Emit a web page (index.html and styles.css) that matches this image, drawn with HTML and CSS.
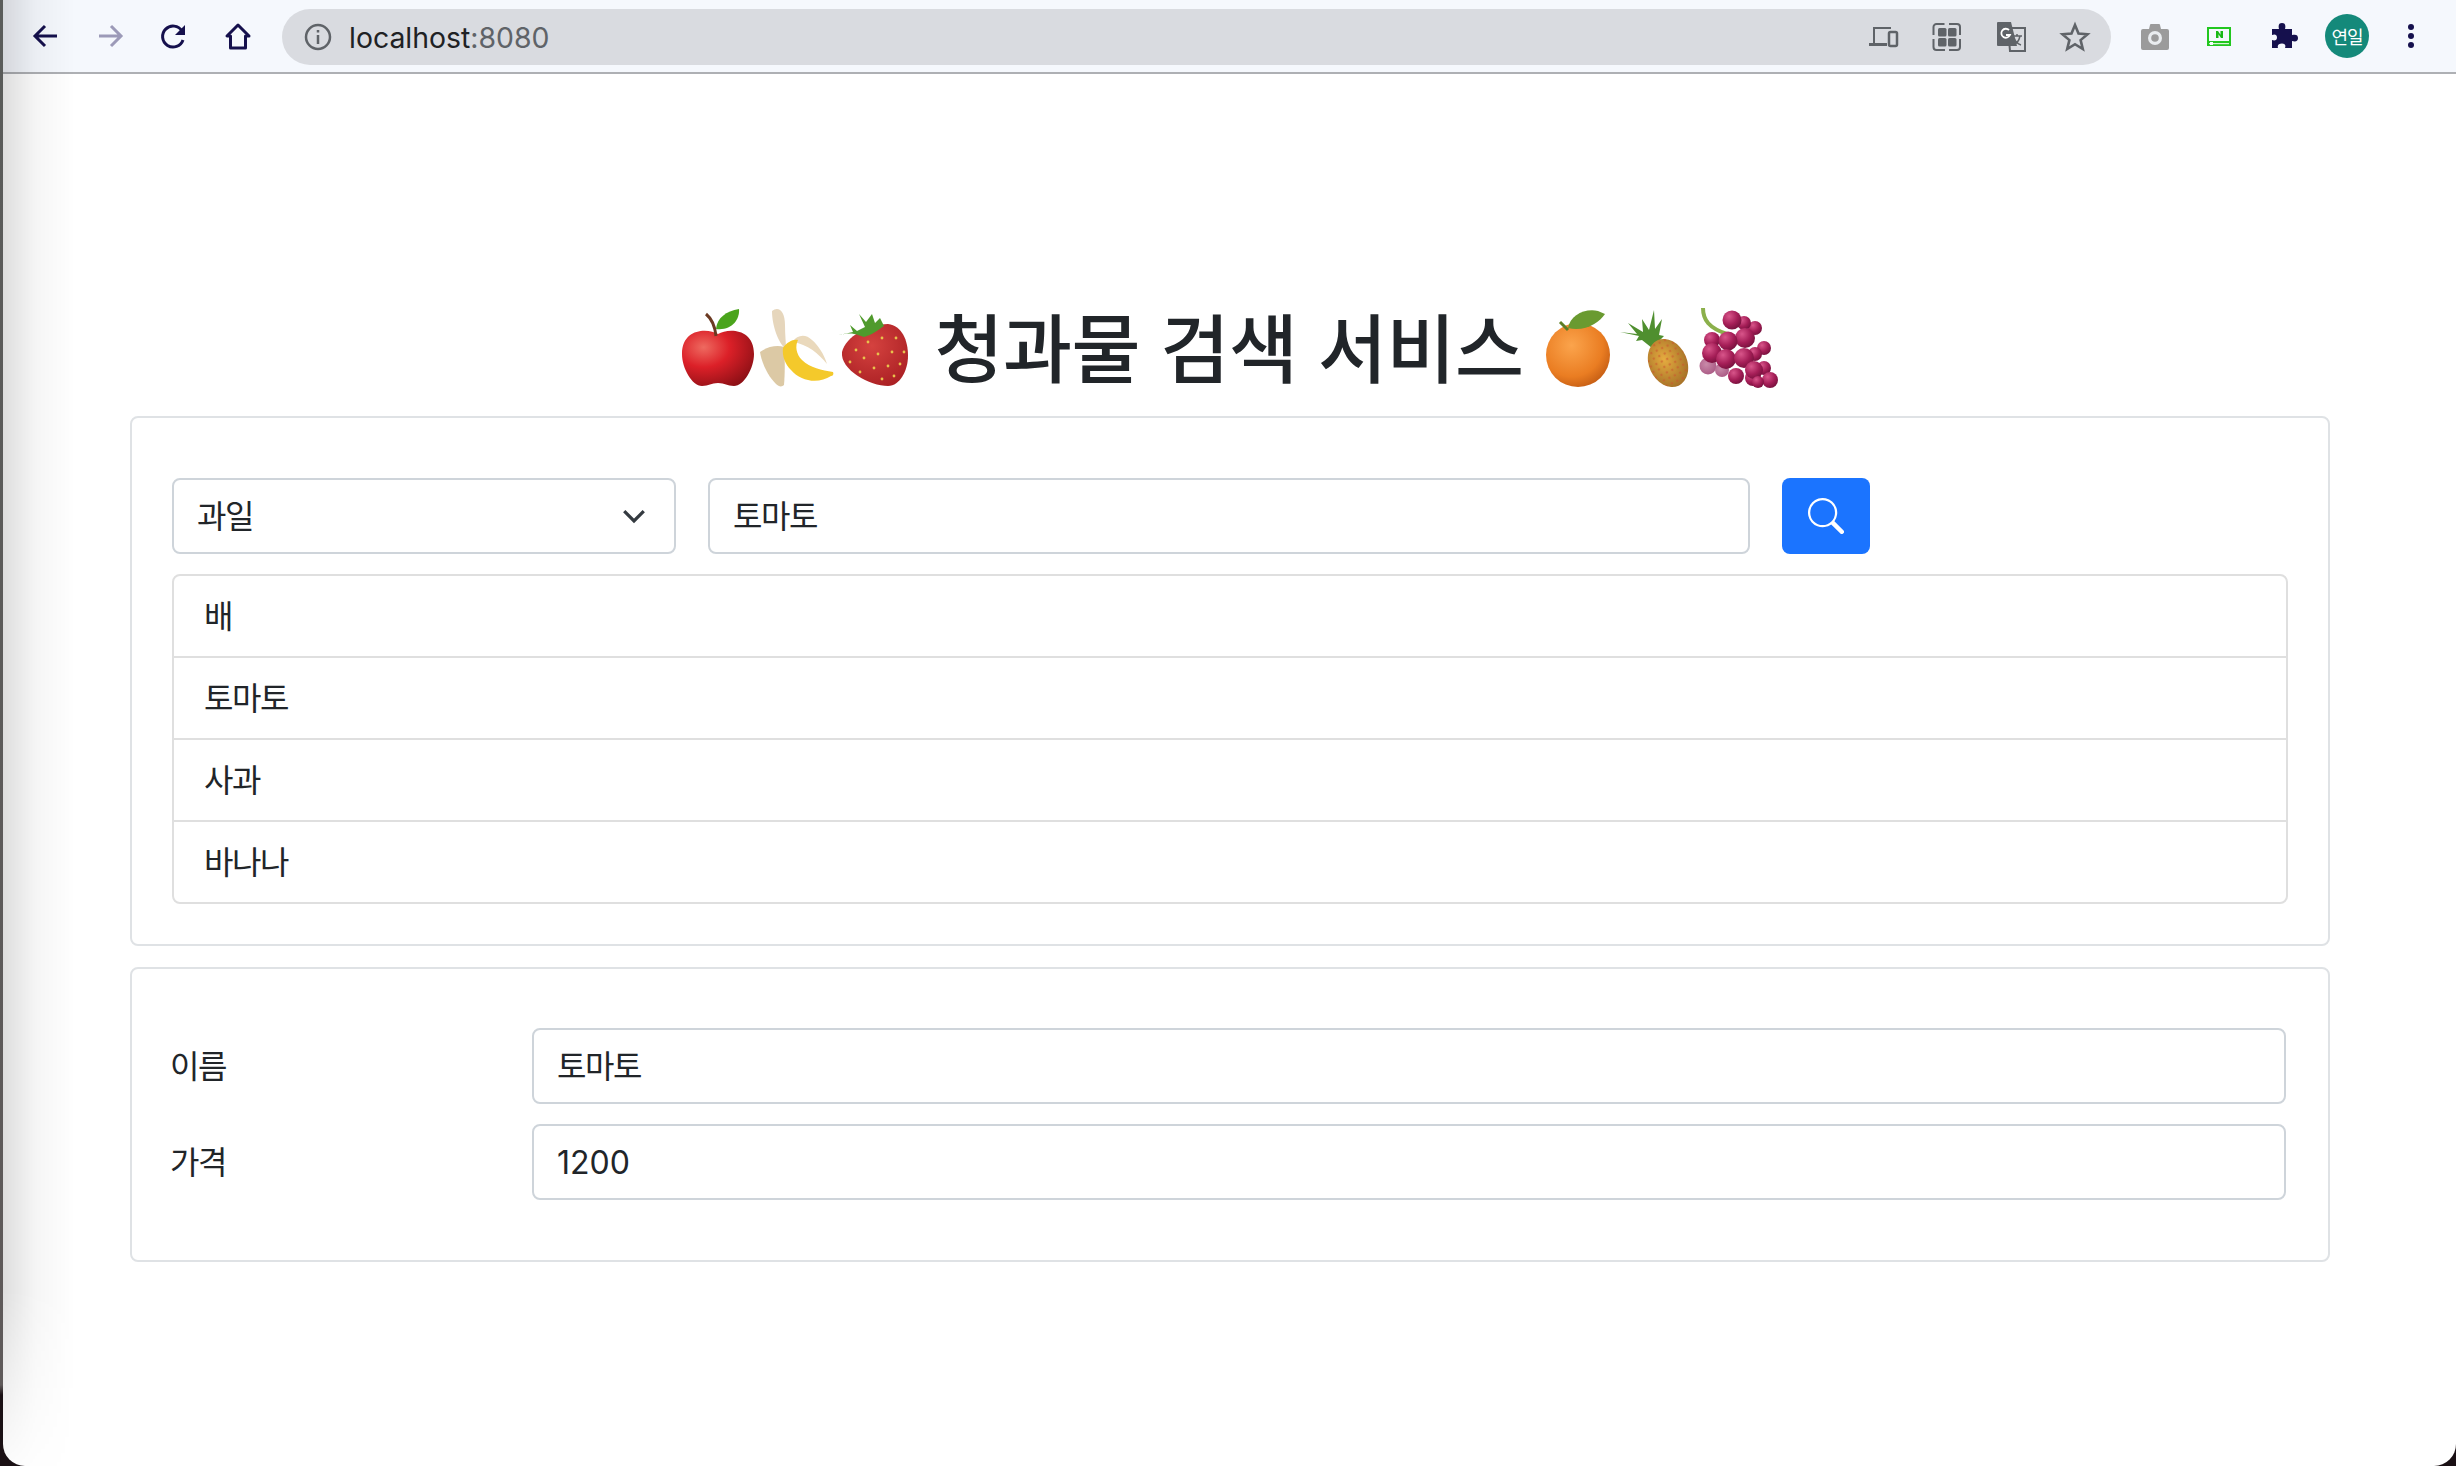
FILE: index.html
```html
<!DOCTYPE html>
<html lang="ko">
<head>
  <meta charset="UTF-8">
  <title>청과물 검색 서비스</title>
  <link rel="stylesheet" href="styles.css">
</head>
<body>
  <div class="window">
    <header class="toolbar">
      <svg class="nav-icon" viewBox="0 0 32 32"><path d="M27 16H6M15 6L5 16l10 10" fill="none" stroke="#15104d" stroke-width="3"/></svg>
      <svg class="nav-icon" viewBox="0 0 32 32"><path d="M5 16h21M17 6l10 10-10 10" fill="none" stroke="#9c9ab8" stroke-width="3"/></svg>
      <svg class="nav-icon" viewBox="0 0 32 32"><path d="M25 20a10.500 10.500 0 1 1-1-9" fill="none" stroke="#15104d" stroke-width="3"/><path d="M27 5v10H17z" fill="#15104d"/></svg>
      <svg class="nav-icon" viewBox="0 0 32 32"><path d="M16 5L5 16h3.500v12h15V16H27z" fill="none" stroke="#15104d" stroke-width="3" stroke-linejoin="round"/></svg>
      <div class="omnibox">
        <svg class="omni-info" viewBox="0 0 28 28"><circle cx="14" cy="14" r="12" fill="none" stroke="#5f6368" stroke-width="2.500"/><path d="M14 12v9M14 7v2.500" stroke="#5f6368" stroke-width="2.500"/></svg>
        <span class="url">localhost<span class="url-port">:8080</span></span>
        <div class="omni-actions">
          <svg class="omni-icon" viewBox="0 0 32 32"><path d="M6 6h18v2H8v14h12v3H2v-3h4z" fill="#5f6368"/><rect x="22" y="11" width="8" height="14" rx="1.500" fill="none" stroke="#5f6368" stroke-width="2.500"/></svg>
          <svg class="omni-icon" viewBox="0 0 32 32"><rect x="7" y="7" width="8.500" height="8.500" rx="1.500" fill="#5f6368"/><rect x="17" y="7" width="8.500" height="8.500" rx="1.500" fill="#5f6368"/><rect x="7" y="17" width="8.500" height="8.500" rx="1.500" fill="#5f6368"/><rect x="17" y="17" width="8.500" height="8.500" rx="1.500" fill="#5f6368"/><path d="M2.500 14V6a3 3 0 0 1 3-3h8M18 3h8a3 3 0 0 1 3 3v8M29 18v8a3 3 0 0 1-3 3h-8M14 29H5.500a3 3 0 0 1-3-3v-8" fill="none" stroke="#5f6368" stroke-width="2"/></svg>
          <svg class="omni-icon" viewBox="0 0 32 32"><path d="M13 7h17v23H15z" fill="none" stroke="#5f6368" stroke-width="2"/><path d="M3 1h13l6 24H3a1 1 0 0 1-1-1V2a1 1 0 0 1 1-1z" fill="#5f6368"/><path d="M14 9a4.500 4.500 0 1 0 1 5h-4" fill="none" stroke="#fff" stroke-width="1.800"/><path d="M18 15h9M22 13v2M25 15c-1 5-4 8-7 9M19 17c1 3 4 6 7 7" fill="none" stroke="#5f6368" stroke-width="1.500"/></svg>
          <svg class="omni-icon" viewBox="0 0 32 32"><path d="M16 4l3.500 8.500 9 .7-6.900 5.900 2.200 8.900L16 23.200 8.200 28l2.200-8.900-6.900-5.900 9-.7z" fill="none" stroke="#5f6368" stroke-width="2.600"/></svg>
        </div>
      </div>
      <div class="toolbar-actions">
        <svg class="ext-icon" viewBox="0 0 32 32"><path d="M2 11a2 2 0 0 1 2-2h6l1-4a1 1 0 0 1 1-1h8a1 1 0 0 1 1 1l1 4h6a2 2 0 0 1 2 2v17a2 2 0 0 1-2 2H4a2 2 0 0 1-2-2z" fill="#9b9b9b"/><circle cx="16" cy="18" r="7" fill="#e9ecef"/><circle cx="16" cy="18" r="3.800" fill="#9b9b9b"/></svg>
        <svg class="ext-icon" viewBox="0 0 32 32"><rect x="4" y="7" width="24" height="19" fill="#22c71f"/><rect x="6" y="9" width="20" height="12" fill="#f5f8fd"/><rect x="6" y="23" width="20" height="1.200" fill="#d8f5d8"/><rect x="7" y="22" width="3" height="3" fill="#f5f8fd"/><path d="M13 18v-7h2l2.500 3.800V11H20v7h-2l-2.500-3.800V18z" fill="#19b816"/></svg>
        <svg class="ext-icon" viewBox="0 0 32 32"><path d="M5 28V20c3 1 5 0 5-2.500S8 13.500 5 15V9h7c-1-4 0-6 3-6s4 2 3 6h7v6c4-1 6 0 6 3s-2 4-6 3v7h-7c1-3 0-4.500-3-4.500S10 25 11 28z" fill="#15104d"/></svg>
        <div class="avatar">연일</div>
        <svg class="ext-icon" viewBox="0 0 32 32"><circle cx="16" cy="7" r="3" fill="#15104d"/><circle cx="16" cy="16" r="3" fill="#15104d"/><circle cx="16" cy="25" r="3" fill="#15104d"/></svg>
      </div>
    </header>

    <main class="page">
      <h1 class="title">
        <svg class="fruit" viewBox="0 0 80 80">
          <defs>
            <radialGradient id="appleFill" cx="0.3" cy="0.3" r="0.8"><stop offset="0" stop-color="#ee6a60"/><stop offset="0.45" stop-color="#dc2028"/><stop offset="1" stop-color="#8e1016"/></radialGradient>
            <radialGradient id="grape" cx="0.35" cy="0.3" r="0.8"><stop offset="0" stop-color="#d8558a"/><stop offset="0.55" stop-color="#a51e57"/><stop offset="1" stop-color="#6e0e38"/></radialGradient>
            <radialGradient id="grapeLow" cx="0.4" cy="0.4" r="0.8"><stop offset="0" stop-color="#c98aa9"/><stop offset="1" stop-color="#a24f7c"/></radialGradient>
          </defs>
          <path d="M40 26c-10-6-36-6-36 20 0 14 10 32 20 32 7 0 9-3 16-3s9 3 16 3c10 0 20-18 20-32 0-26-26-26-36-20z" fill="url(#appleFill)"/>
          <path d="M38 28C37 18 34 11 28 6" fill="none" stroke="#6b3a22" stroke-width="3"/>
          <path d="M38 21C39 10 48 3 61 1c1 11-8 22-23 20z" fill="#4aa41c"/>
        </svg>
        <svg class="fruit" viewBox="0 0 80 80">
          <path d="M14 3c6-5 13-1 13 14 0 10 1 18 1 24-8-6-14-24-14-38z" fill="#e6d6bc"/>
          <path d="M2 44c8-6 18-7 24-5 1 12 1 26 0 38-2 2-5 2-8-1C10 68 4 56 2 44z" fill="#dcc9a5"/>
          <path d="M34 34c6-8 14-8 20-2 6 5 12 14 15 24-8-10-19-20-35-22z" fill="#ead9bc"/>
          <path d="M25 40c4-6 10-9 15-8-3 6-2 14 4 20 8 8 20 10 31 12 1 2 0 4-2 4-12 8-30 6-40-6-6-6-9-14-8-22z" fill="#f4c92b"/>
        </svg>
        <svg class="fruit" viewBox="0 0 80 80">
          <defs><radialGradient id="berryFill" cx="0.45" cy="0.35" r="0.75"><stop offset="0" stop-color="#d5423f"/><stop offset="1" stop-color="#a81e22"/></radialGradient></defs>
          <path d="M4 44C8 28 30 17 50 16c14 2 20 16 20 32 0 14-8 30-20 30C32 78 2 62 4 44z" fill="url(#berryFill)"/>
          <path d="M1 27c8-2 14-2 19 0l6 2c8-2 14-7 20-11l-4-8-5 5-3-9-6 8-7-8 6 13-8 4-7-6 3 7z" fill="#4f9a2c"/>
          <g fill="#e8c24c"><circle cx="18" cy="42" r="1.400"/><circle cx="30" cy="34" r="1.400"/><circle cx="44" cy="30" r="1.400"/><circle cx="58" cy="30" r="1.400"/><circle cx="12" cy="54" r="1.400"/><circle cx="26" cy="50" r="1.400"/><circle cx="40" cy="46" r="1.400"/><circle cx="54" cy="44" r="1.400"/><circle cx="66" cy="44" r="1.400"/><circle cx="22" cy="64" r="1.400"/><circle cx="36" cy="60" r="1.400"/><circle cx="50" cy="58" r="1.400"/><circle cx="62" cy="56" r="1.400"/><circle cx="44" cy="71" r="1.400"/><circle cx="56" cy="68" r="1.400"/></g>
        </svg>
        <span class="title-text">청과물 검색 서비스</span>
        <svg class="fruit" viewBox="0 0 80 80">
          <defs><radialGradient id="orangeFill" cx="0.4" cy="0.35" r="0.75"><stop offset="0" stop-color="#fba44c"/><stop offset="0.65" stop-color="#ea7d22"/><stop offset="1" stop-color="#bb5510"/></radialGradient></defs>
          <ellipse cx="40" cy="47" rx="32" ry="32" fill="url(#orangeFill)"/>
          <path d="M30 20c2-12 16-20 30-17l7 3c-6 9-20 18-37 14z" fill="#6a9a30"/>
          <path d="M22 14l8 8" stroke="#5c7d25" stroke-width="3"/>
        </svg>
        <svg class="fruit" viewBox="0 0 80 80">
          <defs>
            <radialGradient id="pineFill" cx="0.45" cy="0.4" r="0.7"><stop offset="0" stop-color="#e6ac40"/><stop offset="1" stop-color="#9d6a24"/></radialGradient>
            <pattern id="pineDots" width="6" height="6" patternUnits="userSpaceOnUse"><circle cx="3" cy="3" r="1.300" fill="#c9562e" fill-opacity="0.55"/></pattern>
          </defs>
          <path d="M2 24l17 2-9-11 15 9-1-13 7 11 5-20 1 19 7-10-3 16 5 1-12 12-10-8-6 1 3-5z" fill="#4f8f2f"/>
          <ellipse cx="50" cy="55" rx="19" ry="25" transform="rotate(-25 50 55)" fill="url(#pineFill)"/>
          <ellipse cx="50" cy="55" rx="19" ry="25" transform="rotate(-25 50 55)" fill="url(#pineDots)"/>
        </svg>
        <svg class="fruit" viewBox="0 0 80 80">
          <path d="M5 0c0 12 6 20 24 26" fill="none" stroke="#8bb04b" stroke-width="4"/>
          <g fill="url(#grapeLow)"><circle cx="10" cy="58" r="8.500"/><circle cx="24" cy="62" r="7"/></g>
          <g fill="url(#grape)"><circle cx="57" cy="20" r="7"/><circle cx="46" cy="15" r="7"/><circle cx="34" cy="12" r="9.500"/><circle cx="66" cy="40" r="7"/><circle cx="57" cy="46" r="7"/><circle cx="47" cy="30" r="10"/><circle cx="14" cy="32" r="8"/><circle cx="30" cy="33" r="9.500"/><circle cx="14" cy="45" r="10"/><circle cx="28" cy="51" r="10"/><circle cx="46" cy="50" r="10"/><circle cx="38" cy="68" r="8"/><circle cx="66" cy="60" r="7"/><circle cx="55" cy="70" r="8"/><circle cx="56" cy="62" r="9"/><circle cx="72" cy="72" r="8"/><circle cx="60" cy="74" r="6"/></g>
        </svg>
      </h1>

      <section class="card">
        <form class="search-row">
          <div class="select-box">
            <span>과일</span>
            <svg class="chevron" viewBox="0 0 16 16"><path d="M2 5l6 6 6-6" fill="none" stroke="#343a40" stroke-width="2"/></svg>
          </div>
          <div class="field search-field"><span>토마토</span></div>
          <button class="search-btn" type="button">
            <svg viewBox="0 0 16 16"><path d="M11.742 10.344a6.500 6.500 0 1 0-1.397 1.398h-.001c.03.04.062.078.098.115l3.850 3.850a1 1 0 0 0 1.415-1.414l-3.850-3.850a1.007 1.007 0 0 0-.115-.100zM12 6.500a5.500 5.500 0 1 1-11 0 5.500 5.500 0 0 1 11 0z" fill="#fff"/></svg>
          </button>
        </form>
        <ul class="result-list">
          <li><span>배</span></li>
          <li><span>토마토</span></li>
          <li><span>사과</span></li>
          <li><span>바나나</span></li>
        </ul>
      </section>

      <section class="card detail-card">
        <div class="detail-row">
          <label class="detail-label"><span>이름</span></label>
          <div class="field detail-field"><span>토마토</span></div>
        </div>
        <div class="detail-row">
          <label class="detail-label"><span>가격</span></label>
          <div class="field detail-field"><span class="price">1200</span></div>
        </div>
      </section>
    </main>
    <div class="edge-shadow"></div>
  </div>
</body>
</html>
```

FILE: styles.css
```css
html, body {
  margin: 0;
  height: 100%;
  overflow: hidden;
}

body {
  background: linear-gradient(to bottom, #5a5c5a 0, #5f5a5a 1385px, #1a1014 1395px);
  font-family: "Noto Sans CJK KR", "Inter", sans-serif;
  color: #212529;
}

.window {
  position: relative;
  height: 1466px;
  margin-left: 3px;
  background: #fff;
  border-bottom-left-radius: 22px;
  border-bottom-right-radius: 22px;
  overflow: hidden;
}

/* browser chrome */
.toolbar {
  height: 74px;
  box-sizing: border-box;
  padding: 9px 0 0 27px;
  display: flex;
  align-items: flex-start;
  background: #f5f8fd;
  border-bottom: 2px solid #aeb0b4;
}

.nav-icon {
  width: 32px;
  height: 32px;
  margin: 11px 32px 0 0;
  flex: none;
}

.omnibox {
  width: 1829px;
  height: 56px;
  margin-left: -4px;
  flex: none;
  box-sizing: border-box;
  padding-left: 22px;
  display: flex;
  align-items: center;
  background: #d9dbe0;
  border-radius: 28px;
}

.omni-info {
  width: 28px;
  height: 28px;
}

.url {
  margin-left: 17px;
  font-family: "Inter", sans-serif;
  font-size: 28.4px;
  color: #202124;
}

.url-port {
  color: #5f6368;
}

.omni-actions {
  margin-left: auto;
  padding-right: 20px;
  display: flex;
  gap: 32px;
}

.omni-icon {
  width: 32px;
  height: 32px;
}

.toolbar-actions {
  margin: 11px 0 0 28px;
  display: flex;
  align-items: center;
  gap: 32px;
}

.ext-icon {
  width: 32px;
  height: 32px;
}

.avatar {
  width: 44px;
  height: 44px;
  margin: -6px -6px;
  border-radius: 50%;
  background: #14897a;
  color: #fff;
  font-size: 18px;
  letter-spacing: -1px;
  line-height: 44px;
  text-align: center;
}

/* page */
.page {
  padding: 222px 126px 0 127px;
}

.title {
  margin: 0 0 16px;
  padding-right: 4px;
  display: flex;
  justify-content: center;
  align-items: center;
  height: 104px;
  font-size: 75px;
  font-weight: 500;
  line-height: 96px;
  letter-spacing: -0.5px;
  color: #212529;
}

.fruit {
  width: 80px;
  height: 80px;
  flex: none;
}

.title-text {
  margin: 0 14px 6px 16px;
  white-space: nowrap;
}

.card {
  box-sizing: border-box;
  padding: 60px 40px 40px;
  border: 2px solid #dfe2e5;
  border-radius: 8px;
}

.detail-card {
  margin-top: 21px;
  padding: 59px 42px 60px 38px;
}

.search-row {
  display: flex;
  margin-bottom: 20px;
}

.select-box,
.field {
  box-sizing: border-box;
  height: 76px;
  padding: 0 23px;
  display: flex;
  align-items: center;
  border: 2px solid #ced4da;
  border-radius: 8px;
  font-size: 32px;
  letter-spacing: -1.4px;
  color: #212529;
  background: #fff;
}

.select-box span,
.field span,
.result-list span,
.detail-label span {
  position: relative;
  top: -2px;
}

.field .price {
  top: 0;
  font-family: "Inter", sans-serif;
  letter-spacing: 0;
}

.select-box {
  width: 504px;
  justify-content: space-between;
  padding-right: 27px;
}

.chevron {
  width: 26px;
  height: 26px;
}

.search-field {
  width: 1042px;
  margin-left: 32px;
}

.search-btn {
  width: 88px;
  height: 76px;
  margin-left: 32px;
  padding: 0;
  border: 0;
  border-radius: 8px;
  background: #1b74ff;
  display: flex;
  align-items: center;
  justify-content: center;
}

.search-btn svg {
  width: 36px;
  height: 36px;
}

.result-list {
  margin: 0;
  padding: 0;
  list-style: none;
  border: 2px solid #dfdfdf;
  border-radius: 8px;
}

.result-list li {
  height: 80px;
  padding: 0 30px;
  display: flex;
  align-items: center;
  font-size: 32px;
  letter-spacing: -1.4px;
  border-top: 2px solid #dfdfdf;
}

.result-list li:first-child {
  border-top: 0;
}

.detail-row {
  display: flex;
  align-items: center;
}

.detail-row + .detail-row {
  margin-top: 20px;
}

.detail-label {
  width: 362px;
  flex: none;
  font-size: 32px;
  letter-spacing: -1.4px;
}

.detail-field {
  flex: 1;
}

/* soft shadow from the window next to it */
.edge-shadow {
  position: absolute;
  left: 0;
  top: 0;
  bottom: 0;
  width: 72px;
  background: linear-gradient(to right, rgba(0, 0, 0, 0.13), rgba(0, 0, 0, 0.04) 45%, rgba(0, 0, 0, 0));
  -webkit-mask-image: linear-gradient(to bottom, #000 88%, rgba(0, 0, 0, 0.1));
  mask-image: linear-gradient(to bottom, #000 88%, rgba(0, 0, 0, 0.1));
  pointer-events: none;
}
```
